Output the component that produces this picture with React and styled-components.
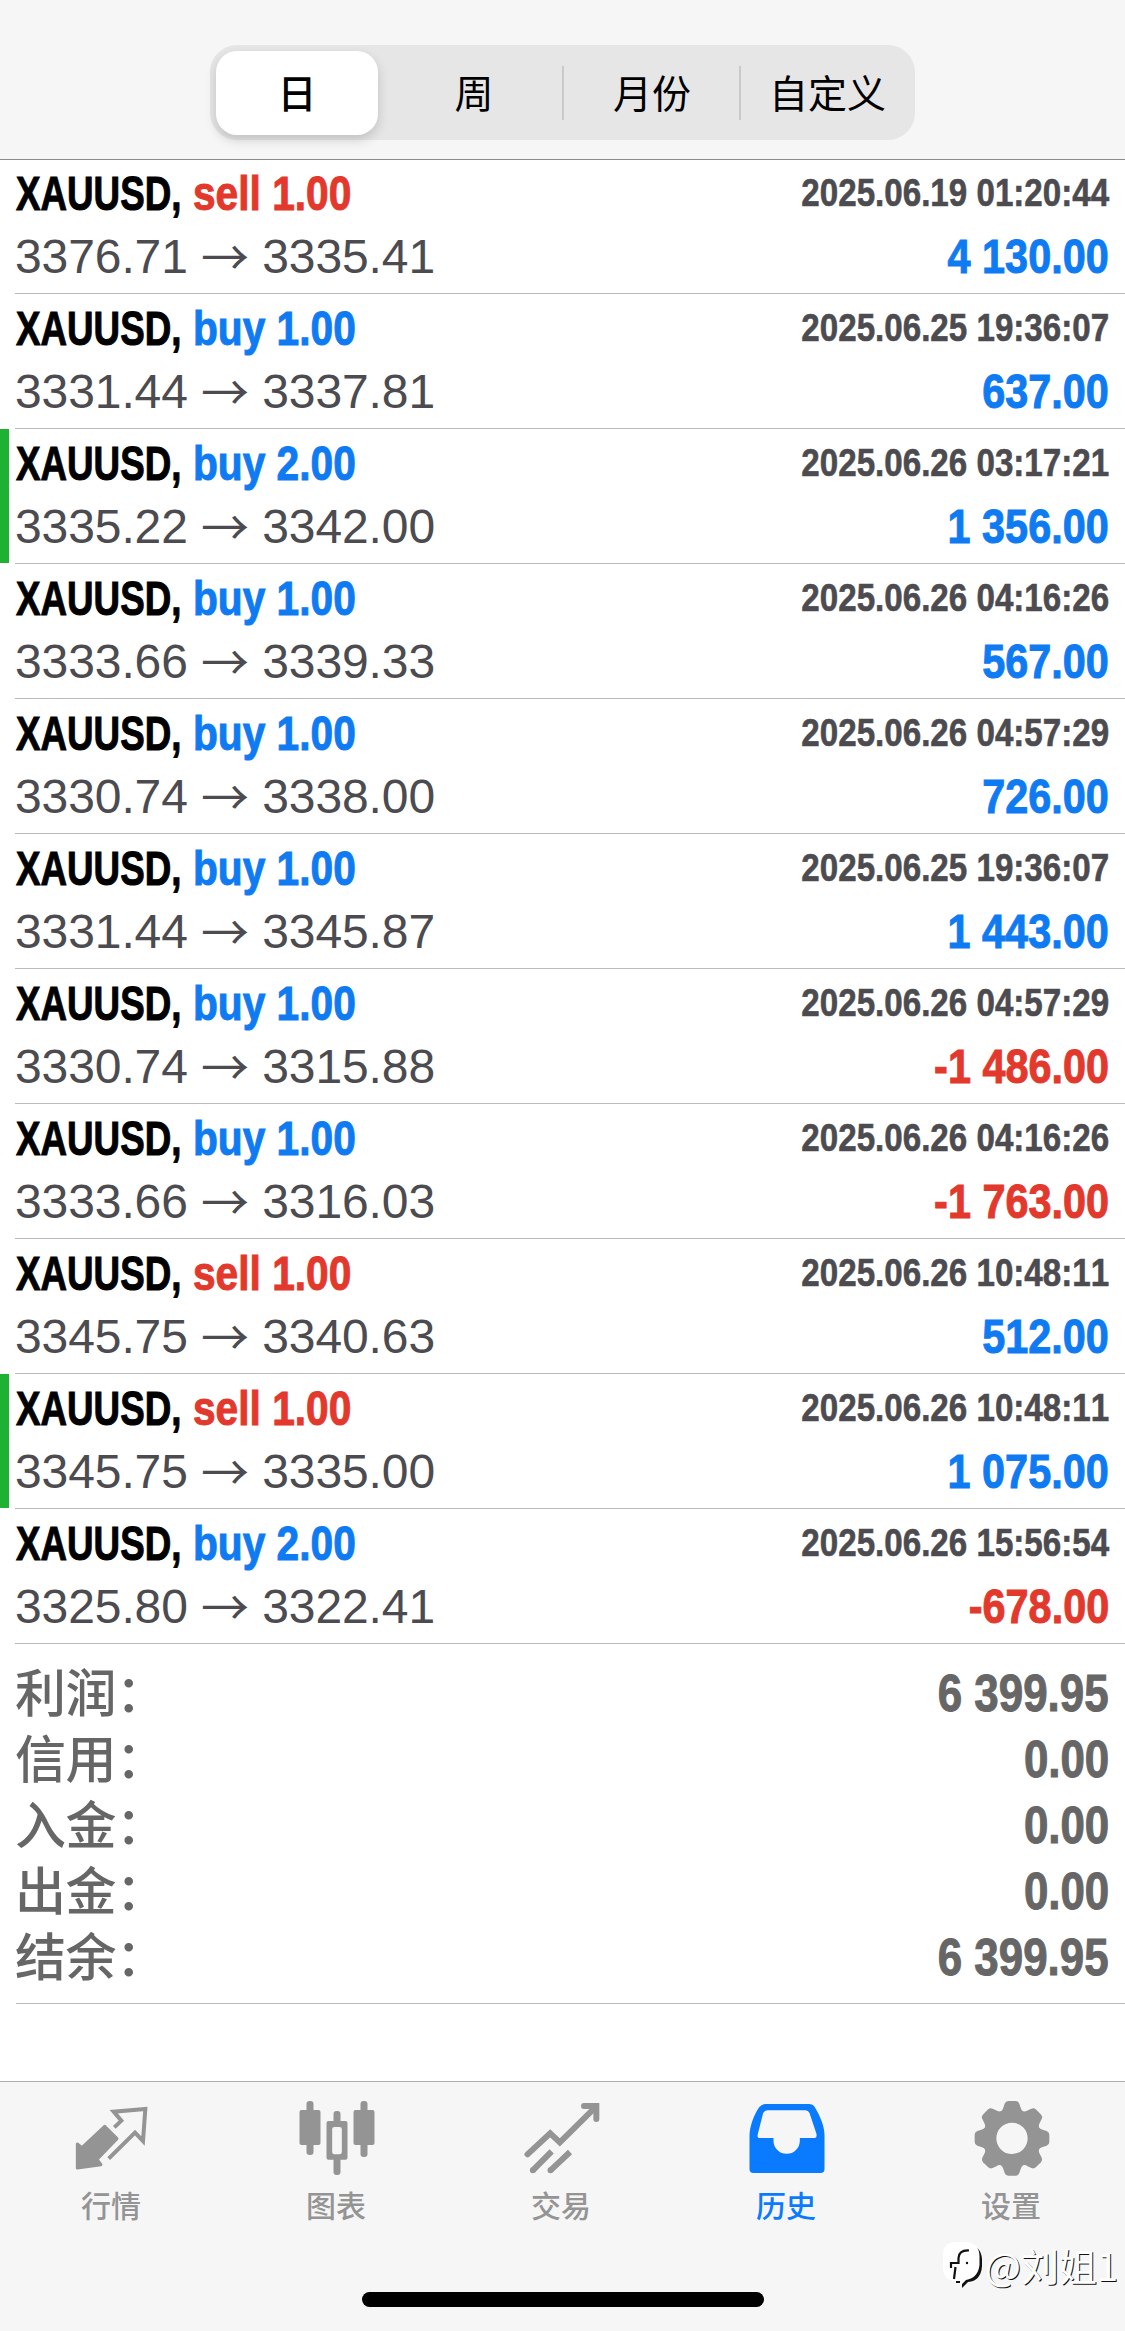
// App.jsx
import React from 'react';
import styled, { createGlobalStyle } from 'styled-components';

const GlobalStyle = createGlobalStyle`
  body {
    margin: 0;
    background: #fff;
    font-family: 'Liberation Sans', 'Noto Sans CJK SC', sans-serif;
    font-kerning: none;
  }
`;

const Screen = styled.div`
  width: 1125px;
  height: 2331px;
  display: flex;
  flex-direction: column;
  position: relative;
  overflow: hidden;
  background: #fff;
`;

const Header = styled.header`
  height: 159px;
  flex-shrink: 0;
  box-sizing: border-box;
  padding-top: 45px;
  display: flex;
  justify-content: center;
  align-items: flex-start;
  background: #f6f6f6;
  box-shadow: 0 1px 0 #8c8c8e;
  position: relative;
  z-index: 1;
`;

const Segments = styled.div`
  width: 705px;
  height: 95px;
  box-sizing: border-box;
  padding: 6px 6px 5px;
  display: grid;
  grid-template-columns: 162px 184px 177px 1fr;
  border-radius: 27px;
  background: #e6e6e7;
`;

const Segment = styled.button`
  border: none;
  padding: 0 0 4px ${(props) => props.$shift || 0}px;
  font-family: 'Noto Sans CJK SC', sans-serif;
  font-size: 39px;
  font-weight: ${(props) => (props.$active ? 500 : 400)};
  line-height: 1;
  color: #000;
  border-radius: ${(props) => (props.$active ? '21px' : '0')};
  background: ${(props) => (props.$active ? '#fff' : 'transparent')};
  box-shadow: ${(props) => (props.$active ? '0 5px 12px rgba(0, 0, 0, 0.16)' : 'none')};
`;

const DividedSegment = styled(Segment)`
  background: linear-gradient(#c9c9cb, #c9c9cb) left center / 2px 54px no-repeat;
`;

const Deal = styled.div`
  height: 135px;
  flex-shrink: 0;
  box-sizing: border-box;
  padding-left: 15px;
  background: ${(props) =>
    props.$marked ? 'linear-gradient(#1db233, #1db233) left top / 9px 134px no-repeat' : 'none'};
`;

const DealBody = styled.div`
  height: 135px;
  box-sizing: border-box;
  padding: 4px 16px 0 0;
  border-bottom: 1px solid #bbbbbe;
`;

const Line = styled.div`
  height: 60px;
  margin-bottom: 3px;
  line-height: 60px;
  display: flex;
  justify-content: space-between;
  white-space: nowrap;
`;

// Bold face squeezed to condensed proportions
const Narrow = styled.span`
  display: inline-block;
  font-weight: 700;
  -webkit-text-stroke: 1px currentColor;
  transform: scaleX(${(props) => props.$scale || 0.85});
  transform-origin: ${(props) => props.$origin || 'right'} center;
`;

const Title = styled.div`
  display: grid;
  grid-template-columns: 177px auto;
  padding-left: 1px;
  font-size: 49px;
`;

const Side = styled(Narrow)`
  color: ${(props) => (props.$sell ? '#e3382c' : '#0f7bf2')};
`;

const Time = styled(Narrow)`
  font-size: 39px;
  color: #4c4b50;
  -webkit-text-stroke-width: 0.6px;
`;

const Prices = styled.span`
  padding-top: 1px;
  font-size: 48px;
  letter-spacing: -0.1px;
  color: #4c4b50;
`;

const Arrow = styled.span`
  position: relative;
  top: 2px;
  font-family: 'Noto Sans CJK SC', sans-serif;
  font-weight: 400;
  line-height: 0;
`;

const Profit = styled(Narrow)`
  font-size: 49px;
  color: ${(props) => (props.$loss ? '#e3382c' : '#0f7bf2')};
`;

const Summary = styled.div`
  height: 360px;
  flex-shrink: 0;
  box-sizing: border-box;
  margin-left: 16px;
  padding: 16px 16px 0 0;
  border-bottom: 1px solid #bbbbbe;
`;

const SummaryRow = styled.div`
  height: 66px;
  line-height: 66px;
  display: flex;
  justify-content: space-between;
  color: #666;
`;

const SummaryLabel = styled.span`
  margin: -3px 0 0 -1px;
  font-family: 'Noto Sans CJK SC', sans-serif;
  font-size: 51px;
  font-weight: 500;
  letter-spacing: -0.5px;
`;

const SummaryValue = styled(Narrow)`
  padding-top: 1px;
  font-size: 51px;
`;

const TabBar = styled.nav`
  height: 250px;
  margin-top: auto;
  flex-shrink: 0;
  box-sizing: border-box;
  padding-top: 14px;
  display: grid;
  grid-template-columns: repeat(5, 1fr);
  grid-template-rows: 196px 15px;
  justify-items: center;
  border-top: 1px solid #adadaf;
  background: #f6f6f6;
`;

const Tab = styled.div`
  display: flex;
  flex-direction: column;
  align-items: center;
  gap: 4px;
  color: ${(props) => (props.$active ? '#0a7bff' : '#949494')};
`;

const TabLabel = styled.span`
  margin-right: 3px;
  font-family: 'Noto Sans CJK SC', sans-serif;
  font-size: 30px;
  font-weight: 500;
  line-height: 40px;
`;

const HomeIndicator = styled.div`
  grid-column: 1 / -1;
  width: 402px;
  height: 15px;
  border-radius: 8px;
  background: #000;
`;

const Watermark = styled.div`
  position: absolute;
  right: 7px;
  bottom: 38px;
  display: flex;
  align-items: center;
  gap: 3px;
  font-family: 'Noto Sans CJK SC', sans-serif;
  font-size: 38px;
  font-weight: 400;
  line-height: 56px;
  color: #fff;
  text-shadow: 1px 1px 0 #111;
`;

const QuotesIcon = () => (
  <svg width="84" height="84" viewBox="0 0 252 252" fill="none" stroke="currentColor">
    <path d="M130 94 151 74 128 47 223 39 216 135 192 110 113 188" strokeWidth="12" />
    <path
      d="M101 91 138 128 78 190 90 206 19 216 19 144 33 155Z"
      fill="currentColor"
      strokeWidth="9"
      strokeLinejoin="round"
    />
  </svg>
);

const ChartIcon = () => (
  <svg width="84" height="84" viewBox="0 0 252 252" fill="currentColor">
    <rect x="31.5" y="15" width="21" height="162" rx="9" />
    <rect x="10.5" y="42" width="63" height="105" rx="6" />
    <rect x="112.5" y="45" width="21" height="192" rx="9" />
    <rect x="91.5" y="75" width="63" height="116" rx="6" />
    <rect x="108.5" y="93" width="29" height="82" rx="7" fill="#f6f6f6" />
    <rect x="193.5" y="15" width="21" height="168" rx="9" />
    <rect x="172.5" y="42" width="63" height="105" rx="6" />
  </svg>
);

const TradeIcon = () => (
  <svg width="84" height="84" viewBox="0 0 252 252" fill="none" stroke="currentColor" strokeWidth="18">
    <path d="M19.5 175 87.5 112 116.5 139 222 35" strokeLinecap="round" />
    <path d="M189 30H226V69" strokeLinecap="round" />
    <path d="M35.5 223 92 166M88.5 223 147 168" />
    <circle cx="35.5" cy="223" r="4.5" strokeWidth="9" />
    <circle cx="88.5" cy="223" r="4.5" strokeWidth="9" />
  </svg>
);

const HistoryIcon = () => (
  <svg width="84" height="84" viewBox="0 0 252 252" fill="currentColor" fillRule="evenodd">
    <path d="M58.5 24H188.5q12 0 18 10C223.5 62 235.5 92 235.5 117V219q0 12-12 12H22.5q-12 0-12-12V122C10.5 92 23.5 57 39.5 34q8-10 19-10ZM63.5 43H178.5q8 0 12 8L211.5 114q2 12-6 12H161.5v8a39.5 39.5 0 0 1-79 0v-8H39.5q-7 0-4-12L51.5 51q5-8 12-8Z" />
  </svg>
);

const SettingsIcon = () => (
  <svg width="84" height="84" viewBox="0 0 252 252" fill="currentColor">
    <g transform="translate(123 127)">
      <circle r="67" fill="none" stroke="currentColor" strokeWidth="40" />
      {[0, 45, 90, 135, 180, 225, 270, 315].map((angle) => (
        <path
          key={angle}
          transform={`rotate(${angle})`}
          d="M-34 -80Q-28 -84 -26 -92L-22 -104Q-19 -112 -11 -112H11Q19 -112 22 -104L26 -92Q28 -84 34 -80L28 -68H-28Z"
        />
      ))}
    </g>
  </svg>
);

const WatermarkLogo = () => (
  <svg width="42" height="48" viewBox="0 0 42 48">
    <path d="M16 4H29Q41 5 42 18V25Q41 40 28 41L22 47V42H16Z" fill="#111" />
    <path d="M14 1H27Q39 2 39.5 15V24Q38 37 26 39L20 45V40H13Q3 38 3 27V14Q3 2 14 1Z" fill="#fff" />
    <path d="M29 9.5Q19 9 18.5 17V22H11V27M15.5 26 14 38" fill="none" stroke="#111" strokeWidth="2.2" />
    <circle cx="27" cy="22" r="1.2" fill="#111" />
  </svg>
);

const deals = [
  { side: 'sell', volume: '1.00', open: '3376.71', close: '3335.41', time: '2025.06.19 01:20:44', profit: '4 130.00' },
  { side: 'buy', volume: '1.00', open: '3331.44', close: '3337.81', time: '2025.06.25 19:36:07', profit: '637.00' },
  { side: 'buy', volume: '2.00', open: '3335.22', close: '3342.00', time: '2025.06.26 03:17:21', profit: '1 356.00', marked: true },
  { side: 'buy', volume: '1.00', open: '3333.66', close: '3339.33', time: '2025.06.26 04:16:26', profit: '567.00' },
  { side: 'buy', volume: '1.00', open: '3330.74', close: '3338.00', time: '2025.06.26 04:57:29', profit: '726.00' },
  { side: 'buy', volume: '1.00', open: '3331.44', close: '3345.87', time: '2025.06.25 19:36:07', profit: '1 443.00' },
  { side: 'buy', volume: '1.00', open: '3330.74', close: '3315.88', time: '2025.06.26 04:57:29', profit: '-1 486.00' },
  { side: 'buy', volume: '1.00', open: '3333.66', close: '3316.03', time: '2025.06.26 04:16:26', profit: '-1 763.00' },
  { side: 'sell', volume: '1.00', open: '3345.75', close: '3340.63', time: '2025.06.26 10:48:11', profit: '512.00' },
  { side: 'sell', volume: '1.00', open: '3345.75', close: '3335.00', time: '2025.06.26 10:48:11', profit: '1 075.00', marked: true },
  { side: 'buy', volume: '2.00', open: '3325.80', close: '3322.41', time: '2025.06.26 15:56:54', profit: '-678.00' },
];

const summary = [
  ['利润：', '6 399.95'],
  ['信用：', '0.00'],
  ['入金：', '0.00'],
  ['出金：', '0.00'],
  ['结余：', '6 399.95'],
];

const tabs = [
  { label: '行情', Icon: QuotesIcon },
  { label: '图表', Icon: ChartIcon },
  { label: '交易', Icon: TradeIcon },
  { label: '历史', Icon: HistoryIcon, active: true },
  { label: '设置', Icon: SettingsIcon },
];

const App = () => {
  return (
    <>
      <GlobalStyle />
      <Screen>
        <Header>
          <Segments>
            <Segment $active>日</Segment>
            <Segment $shift={8}>周</Segment>
            <DividedSegment $shift={3}>月份</DividedSegment>
            <DividedSegment $shift={7}>自定义</DividedSegment>
          </Segments>
        </Header>

        {deals.map((deal, index) => (
          <Deal key={index} $marked={deal.marked}>
            <DealBody>
              <Line>
                <Title>
                  <Narrow $origin="left" $scale={0.75}>XAUUSD,</Narrow>
                  <Side $origin="left" $scale={0.83} $sell={deal.side === 'sell'}>
                    {deal.side} {deal.volume}
                  </Side>
                </Title>
                <Time>{deal.time}</Time>
              </Line>
              <Line>
                <Prices>
                  {deal.open} <Arrow>→</Arrow> {deal.close}
                </Prices>
                <Profit $scale={0.845} $loss={deal.profit.startsWith('-')}>{deal.profit}</Profit>
              </Line>
            </DealBody>
          </Deal>
        ))}

        <Summary>
          {summary.map(([label, value]) => (
            <SummaryRow key={label}>
              <SummaryLabel>{label}</SummaryLabel>
              <SummaryValue $scale={0.86}>{value}</SummaryValue>
            </SummaryRow>
          ))}
        </Summary>

        <TabBar>
          {tabs.map(({ label, Icon, active }) => (
            <Tab key={label} $active={active}>
              <Icon />
              <TabLabel>{label}</TabLabel>
            </Tab>
          ))}
          <HomeIndicator />
        </TabBar>

        <Watermark>
          <WatermarkLogo />
          <span>@刘姐1</span>
        </Watermark>
      </Screen>
    </>
  );
};

export default App;
